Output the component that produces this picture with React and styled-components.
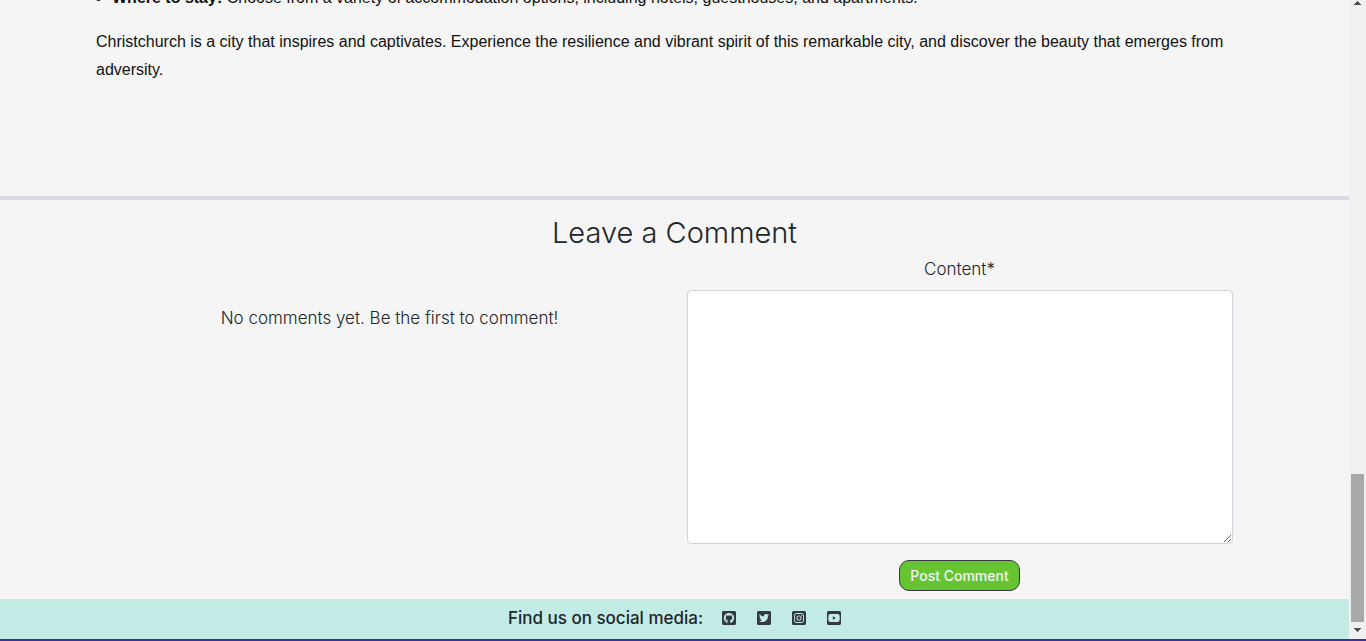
import React from 'react';
import styled, { createGlobalStyle } from 'styled-components';
import {
  FaGithubSquare,
  FaTwitterSquare,
  FaInstagramSquare,
  FaYoutubeSquare,
} from 'react-icons/fa';

const GlobalStyle = createGlobalStyle`
  *, *::before, *::after { box-sizing: border-box; }
  body {
    margin: 0;
    background: #f5f5f5;
    color: #212529;
    font-family: Inter, "Liberation Sans", sans-serif;
    font-size: 17px;
    line-height: 24px;
  }
`;

const Screen = styled.div`
  display: flex;
  flex-direction: column;
  height: 100vh;
  overflow: hidden;
  border-bottom: 2px solid #40309a;
`;

const Viewport = styled.div`
  display: flex;
  flex: 1;
  min-height: 0;
`;

const Page = styled.div`
  display: flex;
  flex: 1;
  flex-direction: column;
  justify-content: flex-end;
  min-width: 0;
  overflow: hidden;
`;

const Article = styled.article`
  padding: 0 96px 112px;
  color: #111;
  font-family: "Liberation Sans", Arial, sans-serif;
  font-size: 16px;
  line-height: 28px;
`;

const TipList = styled.ul`
  margin: 0 0 16px;
  padding-left: 16px;
`;

const Paragraph = styled.p`
  margin: 0;
`;

const Comments = styled.section`
  padding: 15px 0 8px;
  border-top: 4px solid #dcd8e5;
  text-align: center;
`;

const Heading = styled.h2`
  margin: 0 0 7px;
  font-size: 29px;
  font-weight: 300;
  line-height: 35px;
`;

const Columns = styled.div`
  display: grid;
  grid-template-columns: 1fr 1fr;
  max-width: 1140px;
  margin: 0 auto;
`;

const Column = styled.div`
  padding: 0 12px;
`;

const EmptyNote = styled.p`
  margin: 49px 0 0;
  font-weight: 300;
`;

const CommentForm = styled.form`
  display: flex;
  flex-direction: column;
  align-items: center;
`;

const Label = styled.label`
  margin-bottom: 9px;
  font-weight: 300;
`;

const CommentBox = styled.textarea`
  display: block;
  width: 100%;
  height: 254px;
  margin: 0 0 16px;
  padding: 6px 12px;
  border: 1px solid #ced4da;
  border-radius: 4px;
  background: #fff;
  color: #212529;
  font: inherit;
  resize: vertical;
`;

const PostButton = styled.button`
  height: 31px;
  padding: 0 10px;
  border: 1px solid #343a40;
  border-radius: 10px;
  background: #66c432;
  color: #f4f4f4;
  font-family: inherit;
  font-size: 14px;
  font-weight: 500;
  line-height: 21px;
`;

const Footer = styled.footer`
  display: flex;
  align-items: center;
  justify-content: center;
  gap: 19px;
  height: 40px;
  flex: none;
  padding-bottom: 2px;
  background: #c3ebe6;
`;

const FooterTitle = styled.span`
  font-weight: 500;
`;

const SocialLinks = styled.nav`
  display: flex;
  gap: 21px;
`;

const SocialLink = styled.a`
  display: flex;
  color: #343a40;
  font-size: 16px;
`;

const SquareIcon = styled.span`
  display: flex;

  svg {
    width: 14px;
    height: 16px;
  }
`;

const ScrollTrack = styled.div`
  display: flex;
  flex-direction: column;
  align-items: center;
  justify-content: space-between;
  width: 17px;
  padding: 1px 0 7px;
  background: #f0f0f0;
`;

const ThumbGroup = styled.div`
  display: flex;
  flex-direction: column;
  align-items: center;
  gap: 6px;
`;

const Thumb = styled.div`
  width: 13px;
  height: 148px;
  background: #a8a8a8;
`;

const Arrow = styled.svg`
  display: block;
  width: 7px;
  height: 4px;
  fill: #505050;
  shape-rendering: crispEdges;
`;

const socials = [
  { name: 'GitHub', Icon: FaGithubSquare },
  { name: 'Twitter', Icon: FaTwitterSquare },
  { name: 'Instagram', Icon: FaInstagramSquare },
  { name: 'YouTube', Icon: FaYoutubeSquare },
];

export default function App() {
  return (
    <>
      <GlobalStyle />
      <Screen>
        <Viewport>
          <Page>
            <Article>
              <TipList>
                <li>
                  <strong>Where to stay:</strong> Choose from a variety of accommodation
                  options, including hotels, guesthouses, and apartments.
                </li>
              </TipList>
              <Paragraph>
                Christchurch is a city that inspires and captivates. Experience the resilience
                and vibrant spirit of this remarkable city, and discover the beauty that emerges
                from adversity.
              </Paragraph>
            </Article>
            <Comments>
              <Heading>Leave a Comment</Heading>
              <Columns>
                <Column>
                  <EmptyNote>No comments yet. Be the first to comment!</EmptyNote>
                </Column>
                <Column>
                  <CommentForm onSubmit={(event) => event.preventDefault()}>
                    <Label htmlFor="content">Content*</Label>
                    <CommentBox id="content" name="content" required />
                    <PostButton type="submit">Post Comment</PostButton>
                  </CommentForm>
                </Column>
              </Columns>
            </Comments>
            <Footer>
              <FooterTitle>Find us on social media:</FooterTitle>
              <SocialLinks>
                {socials.map(({ name, Icon }) => (
                  <SocialLink key={name} href="#" aria-label={name}>
                    <SquareIcon>
                      <Icon />
                    </SquareIcon>
                  </SocialLink>
                ))}
              </SocialLinks>
            </Footer>
          </Page>
          <ScrollTrack aria-hidden="true">
            <Arrow viewBox="0 0 7 4">
              <path d="M3 0h1v1h1v1h1v1h1v1H0V3h1V2h1V1h1z" />
            </Arrow>
            <ThumbGroup>
              <Thumb />
              <Arrow viewBox="0 0 7 4">
                <path d="M0 0h7v1H6v1H5v1H4v1H3V3H2V2H1V1H0z" />
              </Arrow>
            </ThumbGroup>
          </ScrollTrack>
        </Viewport>
      </Screen>
    </>
  );
}
